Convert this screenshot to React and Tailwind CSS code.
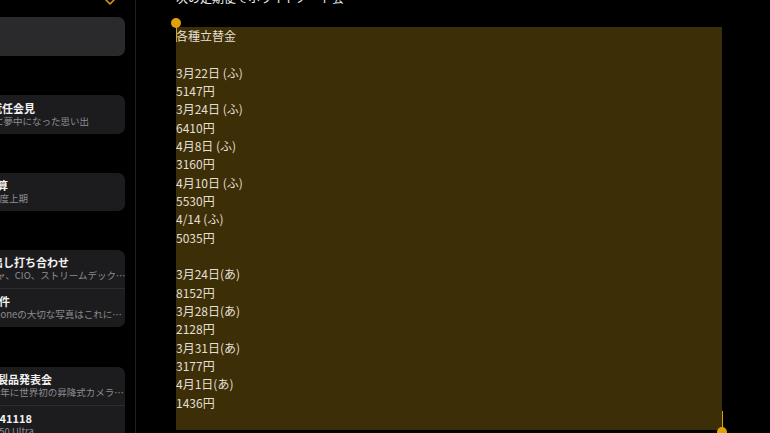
import React from "react";

const font = { fontFamily: '"Noto Sans CJK JP", "Noto Sans", sans-serif' };

function Row({ title, sub, titleShift, subShift, last }) {
  return (
    <div className={`h-[38.5px] flex flex-col justify-center overflow-hidden whitespace-nowrap ${last ? "" : "border-b border-[#2c2c2e]"}`}>
      <div className="text-[11px] leading-[14px] font-bold text-[#f2f2f2]" style={{ marginLeft: titleShift }}>{title}</div>
      <div className="text-[9.5px] leading-[13px] text-[#8d8d92]" style={{ marginLeft: subShift }}>{sub}</div>
    </div>
  );
}

const lines = [
  "各種立替金", "", "3月22日 (ふ)", "5147円", "3月24日 (ふ)", "6410円", "4月8日 (ふ)", "3160円",
  "4月10日 (ふ)", "5530円", "4/14 (ふ)", "5035円", "", "3月24日(あ)", "8152円", "3月28日(あ)",
  "2128円", "3月31日(あ)", "3177円", "4月1日(あ)", "1436円", "",
];

export default function App() {
  return (
    <div className="w-[770px] h-[433px] bg-black flex overflow-hidden" style={font}>
      <div className="w-[136px] shrink-0 border-r border-[#1f1f1f] h-full relative">
        <div className="absolute left-[104px] top-[-3px] text-[#e0a008]">
          <svg width="12" height="10" viewBox="0 0 12 10"><path d="M2 3 L6 7 L10 3" fill="none" stroke="currentColor" strokeWidth="1.5" strokeLinecap="round" strokeLinejoin="round"/></svg>
        </div>
        <div className="w-[125px] flex flex-col">
          <div className="mt-[17px] h-[39px] bg-[#2a2a2c] rounded-r-[7px]" />
          <div className="mt-[39px] bg-[#1c1c1e] rounded-r-[7px]">
            <Row title="就任会見" sub="に夢中になった思い出" titleShift={-9} subShift={-6} last />
          </div>
          <div className="mt-[39px] bg-[#1c1c1e] rounded-r-[7px]">
            <Row title="予算" sub="年度上期" titleShift={-14} subShift={-10} last />
          </div>
          <div className="mt-[39px] bg-[#1c1c1e] rounded-r-[7px]">
            <Row title="出し打ち合わせ" sub="ャ、CIO、ストリームデック…" titleShift={-8} subShift={-4} />
            <Row title="案件" sub="iPhoneの大切な写真はこれに…" titleShift={-12} subShift={-14} last />
          </div>
          <div className="mt-[40px] bg-[#1c1c1e] rounded-r-[7px]">
            <Row title="新製品発表会" sub="9年に世界初の昇降式カメラ…" titleShift={-14} subShift={-5} />
            <Row title="241118" sub="550 Ultra" titleShift={-7} subShift={-6} last />
          </div>
        </div>
      </div>
      <div className="flex-1 relative pl-[40px]">
        <div className="text-[12px] leading-[18px] text-[#f0f0f0] mt-[-11px] whitespace-nowrap">次の定期便でホワイトノート会</div>
        <div className="mt-[20px] w-[546px] bg-[#3c2f07] text-[12px] leading-[18.33px] text-[#e4dfd3]">
          {lines.map((l, i) => (
            <div key={i} className="h-[18.33px] whitespace-nowrap">{l}</div>
          ))}
        </div>
        <div className="absolute left-[35px] top-[18px] w-[10px] h-[10px] rounded-full bg-[#e0a008]" />
        <div className="absolute left-[39.5px] top-[23px] w-[1.5px] h-[19px] bg-[#e0a008]" />
        <div className="absolute left-[585.5px] top-[411px] w-[1.5px] h-[19px] bg-[#e0a008]" />
        <div className="absolute left-[581px] top-[427px] w-[10px] h-[10px] rounded-full bg-[#e0a008]" />
      </div>
    </div>
  );
}
